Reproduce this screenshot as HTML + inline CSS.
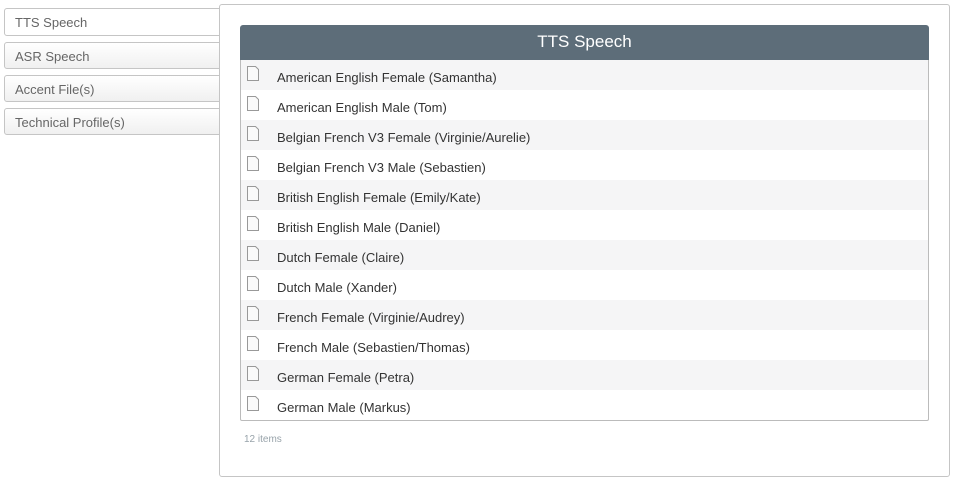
<!DOCTYPE html>
<html><head><style>
body{margin:0;width:954px;height:481px;background:#fff;font-family:"Liberation Sans",sans-serif;position:relative;overflow:hidden}
.tab{position:absolute;left:4px;width:230px;height:26px;border:1px solid #c5c5c5;border-radius:3px;background:linear-gradient(#fff,#f0f0f0);color:#666;font-size:13px;line-height:27px;padding-left:10px;box-sizing:border-box}
.panel{position:absolute;left:219px;top:4px;width:731px;height:473px;border:1px solid #c5c5c5;border-radius:3px;background:#fff;box-sizing:border-box}
.hdr{position:absolute;left:240px;top:25px;width:689px;height:35px;background:#5d6d79;color:#fff;font-size:17px;text-align:center;line-height:34px;border-radius:3px 3px 0 0}
.list{position:absolute;left:240px;top:60px;width:689px;height:361px;border:1px solid #bbb;border-top:none;box-sizing:border-box;border-radius:0 0 2px 2px}
.row{height:30px;line-height:35px;font-size:13px;color:#333;padding-left:36px;position:relative}
.row:nth-child(odd){background:#f5f5f6}
.row svg{position:absolute;left:6px;top:6px}
.cnt{position:absolute;left:244px;top:434px;font-size:10px;color:#98a3aa}
</style></head><body>
<div class="tab" style="top:8px;height:28px;background:#fff;line-height:28px">TTS Speech</div>
<div class="tab" style="top:42px;height:27px">ASR Speech</div>
<div class="tab" style="top:75px;height:27px">Accent File(s)</div>
<div class="tab" style="top:108px;height:27px">Technical Profile(s)</div>
<div class="panel"></div>
<div class="hdr">TTS Speech</div>
<div class="list">
<div class="row"><svg width="12" height="15"><path d="M.5 .5h8l3 3v11H.5z" fill="#fafafa" stroke="#999"/></svg>American English Female (Samantha)</div>
<div class="row"><svg width="12" height="15"><path d="M.5 .5h8l3 3v11H.5z" fill="#fafafa" stroke="#999"/></svg>American English Male (Tom)</div>
<div class="row"><svg width="12" height="15"><path d="M.5 .5h8l3 3v11H.5z" fill="#fafafa" stroke="#999"/></svg>Belgian French V3 Female (Virginie/Aurelie)</div>
<div class="row"><svg width="12" height="15"><path d="M.5 .5h8l3 3v11H.5z" fill="#fafafa" stroke="#999"/></svg>Belgian French V3 Male (Sebastien)</div>
<div class="row"><svg width="12" height="15"><path d="M.5 .5h8l3 3v11H.5z" fill="#fafafa" stroke="#999"/></svg>British English Female (Emily/Kate)</div>
<div class="row"><svg width="12" height="15"><path d="M.5 .5h8l3 3v11H.5z" fill="#fafafa" stroke="#999"/></svg>British English Male (Daniel)</div>
<div class="row"><svg width="12" height="15"><path d="M.5 .5h8l3 3v11H.5z" fill="#fafafa" stroke="#999"/></svg>Dutch Female (Claire)</div>
<div class="row"><svg width="12" height="15"><path d="M.5 .5h8l3 3v11H.5z" fill="#fafafa" stroke="#999"/></svg>Dutch Male (Xander)</div>
<div class="row"><svg width="12" height="15"><path d="M.5 .5h8l3 3v11H.5z" fill="#fafafa" stroke="#999"/></svg>French Female (Virginie/Audrey)</div>
<div class="row"><svg width="12" height="15"><path d="M.5 .5h8l3 3v11H.5z" fill="#fafafa" stroke="#999"/></svg>French Male (Sebastien/Thomas)</div>
<div class="row"><svg width="12" height="15"><path d="M.5 .5h8l3 3v11H.5z" fill="#fafafa" stroke="#999"/></svg>German Female (Petra)</div>
<div class="row"><svg width="12" height="15"><path d="M.5 .5h8l3 3v11H.5z" fill="#fafafa" stroke="#999"/></svg>German Male (Markus)</div>
</div>
<div class="cnt">12 items</div>
</body></html>
